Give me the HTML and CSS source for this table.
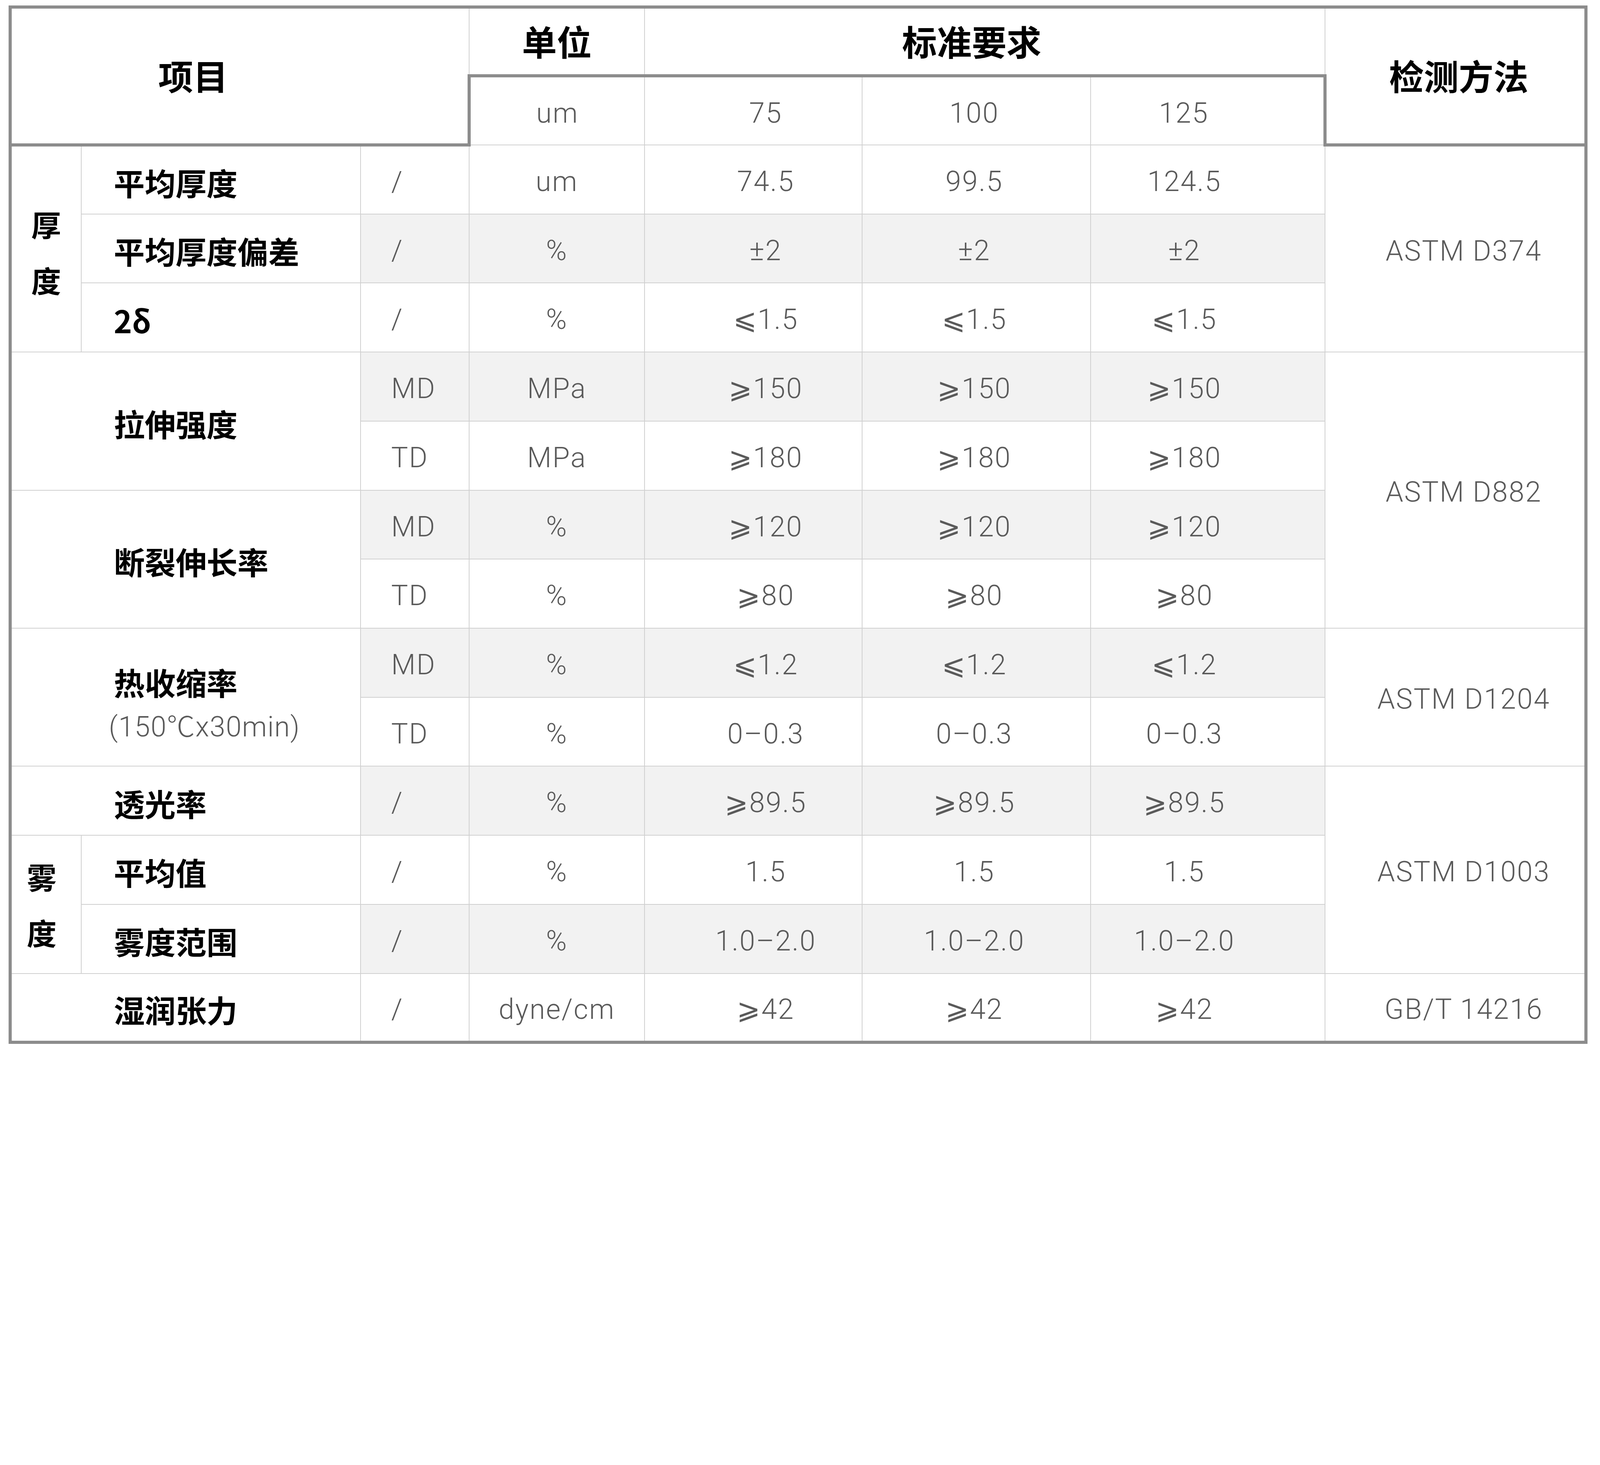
FILE: index.html
```html
<!DOCTYPE html>
<html lang="zh-CN">
<head>
<meta charset="utf-8">
<title>技术参数</title>
<link rel="stylesheet" href="styles.css">
</head>
<body>
<table class="spec">
  <colgroup>
    <col class="c1"><col class="c2"><col class="c3"><col class="c4"><col class="c5"><col class="c6"><col class="c7"><col class="c8">
  </colgroup>
  <thead>
    <tr>
      <th class="hd item" colspan="3" rowspan="2">项目</th>
      <th class="hd top">单位</th>
      <th class="hd top std" colspan="3">标准要求</th>
      <th class="hd method-h" rowspan="2">检测方法</th>
    </tr>
    <tr>
      <td class="v sub-first">um</td>
      <td class="v k5">75</td>
      <td class="v k6">100</td>
      <td class="v k7 sub-last">125</td>
    </tr>
  </thead>
  <tbody>
    <tr>
      <th class="group" rowspan="3">厚<br>度</th>
      <th class="name">平均厚度</th>
      <td class="dir">/</td>
      <td class="v">um</td>
      <td class="v k5">74.5</td>
      <td class="v k6">99.5</td>
      <td class="v k7">124.5</td>
      <td class="v method" rowspan="3">ASTM D374</td>
    </tr>
    <tr>
      <th class="name">平均厚度偏差</th>
      <td class="dir s">/</td>
      <td class="v s">%</td>
      <td class="v k5 s">±2</td>
      <td class="v k6 s">±2</td>
      <td class="v k7 s">±2</td>
    </tr>
    <tr>
      <th class="name">2δ</th>
      <td class="dir">/</td>
      <td class="v">%</td>
      <td class="v k5">⩽1.5</td>
      <td class="v k6">⩽1.5</td>
      <td class="v k7">⩽1.5</td>
    </tr>
    <tr>
      <th class="name wide" colspan="2" rowspan="2">拉伸强度</th>
      <td class="dir s">MD</td>
      <td class="v s">MPa</td>
      <td class="v k5 s">⩾150</td>
      <td class="v k6 s">⩾150</td>
      <td class="v k7 s">⩾150</td>
      <td class="v method" rowspan="4">ASTM D882</td>
    </tr>
    <tr>
      <td class="dir">TD</td>
      <td class="v">MPa</td>
      <td class="v k5">⩾180</td>
      <td class="v k6">⩾180</td>
      <td class="v k7">⩾180</td>
    </tr>
    <tr>
      <th class="name wide" colspan="2" rowspan="2">断裂伸长率</th>
      <td class="dir s">MD</td>
      <td class="v s">%</td>
      <td class="v k5 s">⩾120</td>
      <td class="v k6 s">⩾120</td>
      <td class="v k7 s">⩾120</td>
    </tr>
    <tr>
      <td class="dir">TD</td>
      <td class="v">%</td>
      <td class="v k5">⩾80</td>
      <td class="v k6">⩾80</td>
      <td class="v k7">⩾80</td>
    </tr>
    <tr>
      <th class="name wide two" colspan="2" rowspan="2"><span class="line1">热收缩率</span><span class="line2">(150℃x30min)</span></th>
      <td class="dir s">MD</td>
      <td class="v s">%</td>
      <td class="v k5 s">⩽1.2</td>
      <td class="v k6 s">⩽1.2</td>
      <td class="v k7 s">⩽1.2</td>
      <td class="v method" rowspan="2">ASTM D1204</td>
    </tr>
    <tr>
      <td class="dir">TD</td>
      <td class="v">%</td>
      <td class="v k5">0–0.3</td>
      <td class="v k6">0–0.3</td>
      <td class="v k7">0–0.3</td>
    </tr>
    <tr>
      <th class="name wide" colspan="2">透光率</th>
      <td class="dir s">/</td>
      <td class="v s">%</td>
      <td class="v k5 s">⩾89.5</td>
      <td class="v k6 s">⩾89.5</td>
      <td class="v k7 s">⩾89.5</td>
      <td class="v method" rowspan="3">ASTM D1003</td>
    </tr>
    <tr>
      <th class="group haze" rowspan="2">雾<br>度</th>
      <th class="name">平均值</th>
      <td class="dir">/</td>
      <td class="v">%</td>
      <td class="v k5">1.5</td>
      <td class="v k6">1.5</td>
      <td class="v k7">1.5</td>
    </tr>
    <tr>
      <th class="name">雾度范围</th>
      <td class="dir s">/</td>
      <td class="v s">%</td>
      <td class="v k5 s">1.0–2.0</td>
      <td class="v k6 s">1.0–2.0</td>
      <td class="v k7 s">1.0–2.0</td>
    </tr>
    <tr>
      <th class="name wide" colspan="2">湿润张力</th>
      <td class="dir">/</td>
      <td class="v">dyne/cm</td>
      <td class="v k5">⩾42</td>
      <td class="v k6">⩾42</td>
      <td class="v k7">⩾42</td>
      <td class="v method">GB/T 14216</td>
    </tr>
  </tbody>
</table>
</body>
</html>
```

FILE: styles.css
```css
:root {
  --u: calc(100vw / 5693);
  --thick: calc(12 * var(--u)) solid #8c8c8c;
  --thin: calc(4 * var(--u)) solid #d0d0d0;
}

html {
  overflow: hidden;
}

html, body {
  margin: 0;
  padding: 0;
  background: #ffffff;
}

.spec {
  border-collapse: collapse;
  table-layout: fixed;
  width: calc(5619 * var(--u));
  margin: calc(19 * var(--u)) 0 0 calc(30 * var(--u));
  border: var(--thick);
}

.c1 { width: calc(253 * var(--u)); }
.c2 { width: calc(994 * var(--u)); }
.c3 { width: calc(386 * var(--u)); }
.c4 { width: calc(625 * var(--u)); }
.c5 { width: calc(773 * var(--u)); }
.c6 { width: calc(813 * var(--u)); }
.c7 { width: calc(835 * var(--u)); }
.c8 { width: calc(928 * var(--u)); }

tr {
  height: calc(245.6 * var(--u));
}

th, td {
  border: var(--thin);
  padding: 0;
  vertical-align: middle;
  white-space: nowrap;
}

/* header */
.hd {
  font-family: "Noto Sans CJK SC", sans-serif;
  font-weight: 700;
  font-size: calc(124 * var(--u));
  color: #000000;
  text-align: center;
  line-height: 1.2;
  padding-bottom: calc(8 * var(--u));
}

.item {
  border-bottom: var(--thick);
  padding-right: calc(330 * var(--u));
}

.top {
  border-bottom: var(--thick);
}

.std {
  padding-right: calc(94 * var(--u));
}

.method-h {
  border-bottom: var(--thick);
  padding-left: calc(22 * var(--u));
}

.sub-first {
  border-left: var(--thick);
}

.sub-last {
  border-right: var(--thick);
}

/* body labels */
.group {
  font-family: "Noto Sans CJK SC", sans-serif;
  font-weight: 700;
  font-size: calc(106 * var(--u));
  line-height: calc(198 * var(--u));
  color: #000000;
  text-align: center;
  padding-top: calc(20 * var(--u));
}

.group.haze {
  padding-right: calc(32 * var(--u));
  padding-top: 0;
}

.name {
  font-family: "Noto Sans CJK SC", sans-serif;
  font-weight: 700;
  font-size: calc(110 * var(--u));
  line-height: 1.2;
  color: #000000;
  text-align: left;
  padding-left: calc(115 * var(--u));
  padding-top: calc(18 * var(--u));
}

.name.wide {
  padding-left: calc(364 * var(--u));
}

.name.two {
  padding-top: calc(52 * var(--u));
}

.line1,
.line2 {
  display: block;
  line-height: calc(160 * var(--u));
}

.line2 {
  margin-left: calc(-18 * var(--u));
  font-family: "Roboto", "Noto Sans CJK SC", sans-serif;
  font-weight: 300;
  font-size: calc(100 * var(--u));
  letter-spacing: calc(2 * var(--u));
  color: #5a5a5a;
}

.dir {
  font-family: "Roboto", "DejaVu Sans", sans-serif;
  font-weight: 300;
  font-size: calc(100 * var(--u));
  letter-spacing: calc(3.5 * var(--u));
  line-height: 1.2;
  color: #5a5a5a;
  text-align: left;
  padding-left: calc(108 * var(--u));
  padding-top: calc(16 * var(--u));
}

/* values */
.v {
  font-family: "Roboto", "DejaVu Sans", "Noto Sans CJK SC", sans-serif;
  font-weight: 300;
  font-size: calc(100 * var(--u));
  letter-spacing: calc(3.5 * var(--u));
  line-height: 1.2;
  color: #5a5a5a;
  text-align: center;
  padding-top: calc(16 * var(--u));
}

.k5 { padding-left: calc(88 * var(--u)); }
.k6 { padding-right: calc(14 * var(--u)); }
.k7 { padding-right: calc(167 * var(--u)); }

.method {
  padding-left: calc(62 * var(--u));
}

.s {
  background: #f2f2f2;
}
```
